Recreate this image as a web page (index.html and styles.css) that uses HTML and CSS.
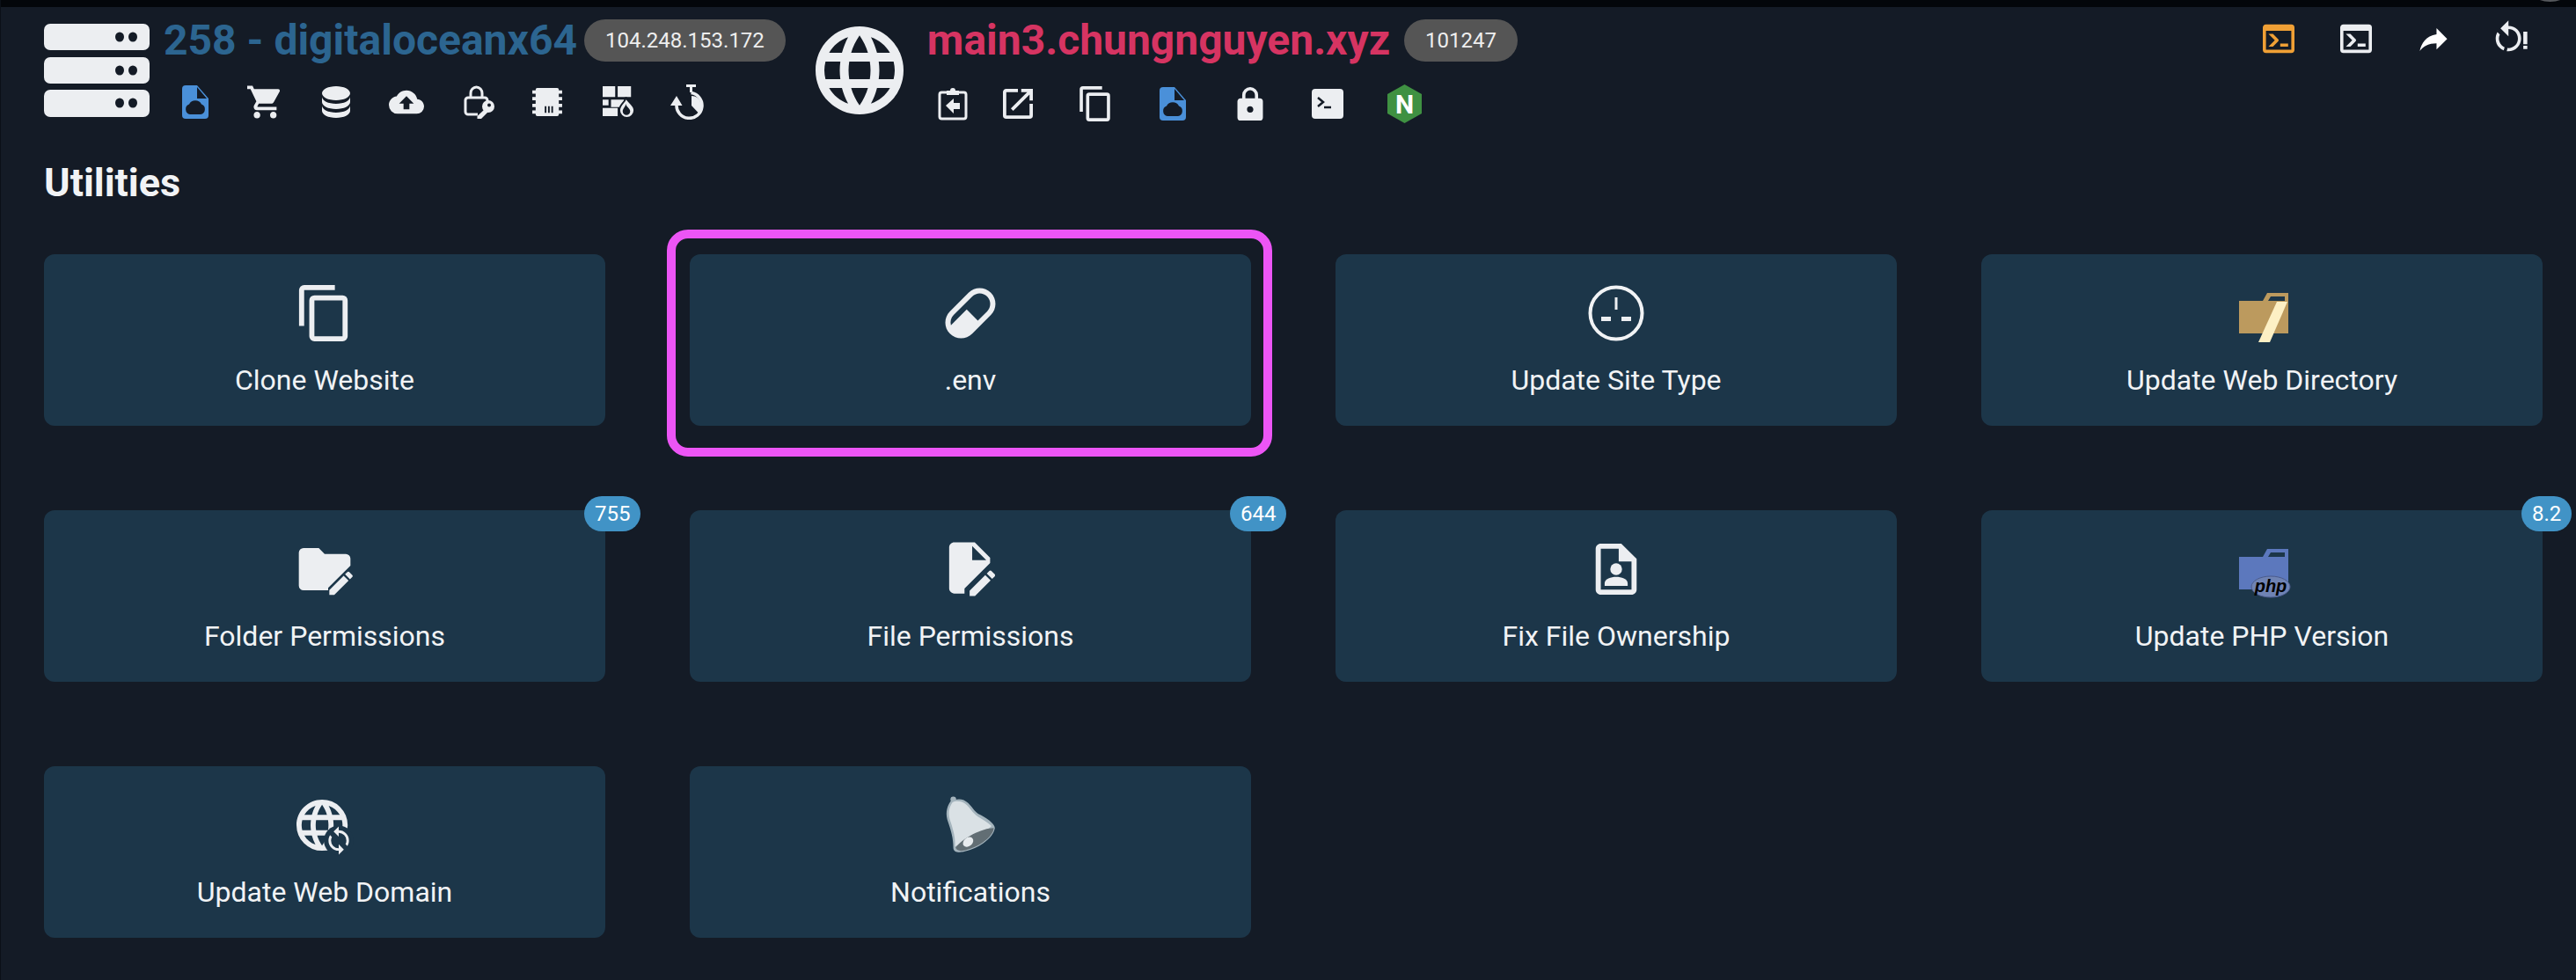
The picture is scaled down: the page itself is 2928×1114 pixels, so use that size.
FILE: index.html
```html
<!DOCTYPE html>
<html lang="en">
<head>
<meta charset="utf-8">
<title>Utilities</title>
<link rel="stylesheet" href="styles.css">
</head>
<body>
<div class="topbar"><span class="topbar-spot"></span></div>
<header class="header">
  <svg class="server-icon" viewBox="0 0 120 106">
    <rect class="ic" x="0" y="0" width="120" height="30" rx="7"/>
    <rect class="ic" x="0" y="38" width="120" height="30" rx="7"/>
    <rect class="ic" x="0" y="75" width="120" height="31" rx="7"/>
    <g class="bgfill">
      <ellipse cx="86" cy="15" rx="5" ry="5.500"/><ellipse cx="101" cy="15" rx="5" ry="5.500"/>
      <ellipse cx="86" cy="53" rx="5" ry="5.500"/><ellipse cx="101" cy="53" rx="5" ry="5.500"/>
      <ellipse cx="86" cy="90" rx="5" ry="5.500"/><ellipse cx="101" cy="90" rx="5" ry="5.500"/>
    </g>
  </svg>
  <div class="host-col">
    <div class="title-row">
      <h1 class="title title-server">258 - digitaloceanx64</h1>
      <span class="pill">104.248.153.172</span>
    </div>
    <div class="tools tools-server">
      <svg class="t-file" viewBox="0 0 30 38"><path class="blue" d="M4 0H17L30 15V34A4 4 0 0 1 26 38H4A4 4 0 0 1 0 34V4A4 4 0 0 1 4 0Z"/><path class="bgfill" d="M17 2V15H28Z M9 33A6 6 0 0 1 8 21.500A8 8 0 0 1 22 21.500A6 6 0 0 1 21 33Z"/></svg>
      <svg class="t-cart" viewBox="1 2 20.500 20"><path class="ic" d="M17,18C15.890,18 15,18.890 15,20A2,2 0 0,0 17,22A2,2 0 0,0 19,20C19,18.890 18.100,18 17,18M1,2V4H3L6.600,11.590L5.240,14.040C5.090,14.320 5,14.650 5,15A2,2 0 0,0 7,17H19V15H7.420A0.250,0.250 0 0,1 7.170,14.750C7.170,14.700 7.180,14.660 7.200,14.630L8.100,13H15.550C16.300,13 16.960,12.580 17.300,11.970L20.880,5.500C20.950,5.340 21,5.170 21,5A1,1 0 0,0 20,4H5.210L4.270,2M7,18C5.890,18 5,18.890 5,20A2,2 0 0,0 7,22A2,2 0 0,0 9,20C9,18.890 8.100,18 7,18Z"/></svg>
      <svg class="t-db" viewBox="4 3 16 18"><path class="ic" d="M12,3C7.580,3 4,4.790 4,7C4,9.210 7.580,11 12,11C16.420,11 20,9.210 20,7C20,4.790 16.420,3 12,3M4,9V12C4,14.210 7.580,16 12,16C16.420,16 20,14.210 20,12V9C20,11.210 16.420,13 12,13C7.580,13 4,11.210 4,9M4,14V17C4,19.210 7.580,21 12,21C16.420,21 20,19.210 20,17V14C20,16.210 16.420,18 12,18C7.580,18 4,16.210 4,14Z"/></svg>
      <svg class="t-cloud" viewBox="0 4 24 16"><path class="ic" d="M14,13V17H10V13H7L12,8L17,13M19.350,10.030C18.670,6.590 15.640,4 12,4C9.110,4 6.600,5.640 5.350,8.030C2.340,8.360 0,10.900 0,14A6,6 0 0,0 6,20H19A5,5 0 0,0 24,15C24,12.360 21.950,10.220 19.350,10.030Z"/></svg>
      <svg class="t-lockkey" viewBox="0 0 36 38"><path class="line" d="M8 14V9A6.500 7 0 0 1 21 9V14M16 33H5A3 3 0 0 1 2 30V17A3 3 0 0 1 5 14H24A3 3 0 0 1 27 17V18"/><circle class="ic" cx="28" cy="24" r="7"/><path class="ic" d="M24 27L27.500 30.500L20 38L15.500 38L15.500 35Z"/><circle class="bgfill" cx="29" cy="22.500" r="2"/></svg>
      <svg class="t-chip" viewBox="0 0 36 34"><rect class="ic" x="4" y="0" width="28" height="34" rx="2"/><path class="ic" d="M0 3H36V7H0ZM0 11H36V15H0ZM0 19H36V23H0ZM0 27H36V31H0Z"/><path class="bgfill" d="M15 22H17V30H15ZM19 22H21V30H19ZM23 22H25V30H23Z"/></svg>
      <svg class="t-wall" viewBox="0 0 39 38"><path class="ic" d="M0 0H15V13H0ZM18 0H34V13H18ZM0 16H7V23H0ZM10 16H26L22 25H10ZM0 26H18V36H0Z"/><path class="ic flame-edge" d="M28 13C29 19 38 21 38 29A9 9 0 0 1 20 29C20 24 23 22 26 18C27 16 28 15 28 13Z"/><path class="bgfill" d="M28 21C28 25 33 26 33 30A4.500 4.500 0 0 1 24 30C24 27 27 25 28 21Z"/></svg>
      <svg class="t-watch" viewBox="0 0 39 40"><path class="ic" d="M18 0H29V3H18ZM22 3H25V9H22Z"/><path class="arc" d="M7 23A14.500 14.500 0 1 0 23.500 9.500"/><path class="ic" d="M0 24L7 13L13.500 24Z"/><path class="ic" d="M24 13A11.500 11.500 0 0 1 32 32.500L24 24Z"/></svg>
    </div>
  </div>
  <svg class="globe-icon" viewBox="2 2 20 20"><path class="ic" d="M16.360,14C16.440,13.340 16.500,12.680 16.500,12C16.500,11.320 16.440,10.660 16.360,10H19.740C19.900,10.640 20,11.310 20,12C20,12.690 19.900,13.360 19.740,14M14.590,19.560C15.190,18.450 15.650,17.250 15.970,16H18.920C17.960,17.650 16.430,18.930 14.590,19.560M14.340,14H9.660C9.560,13.340 9.500,12.680 9.500,12C9.500,11.320 9.560,10.650 9.660,10H14.340C14.430,10.650 14.500,11.320 14.500,12C14.500,12.680 14.430,13.340 14.340,14M12,19.960C11.170,18.760 10.500,17.430 10.090,16H13.910C13.500,17.430 12.830,18.760 12,19.960M8,8H5.080C6.030,6.340 7.570,5.060 9.400,4.440C8.800,5.550 8.350,6.750 8,8M5.080,16H8C8.350,17.250 8.800,18.450 9.400,19.560C7.570,18.930 6.030,17.650 5.080,16M4.260,14C4.100,13.360 4,12.690 4,12C4,11.310 4.100,10.640 4.260,10H7.640C7.560,10.660 7.500,11.320 7.500,12C7.500,12.680 7.560,13.340 7.640,14M12,4.030C12.830,5.230 13.500,6.570 13.910,8H10.090C10.500,6.570 11.170,5.230 12,4.030M18.920,8H15.970C15.650,6.750 15.190,5.550 14.590,4.440C16.430,5.070 17.960,6.340 18.920,8M12,2C6.470,2 2,6.500 2,12A10,10 0 0,0 12,22A10,10 0 0,0 22,12A10,10 0 0,0 12,2Z"/></svg>
  <div class="host-col">
    <div class="title-row">
      <h1 class="title title-site">main3.chungnguyen.xyz</h1>
      <span class="pill pill-site">101247</span>
    </div>
    <div class="tools tools-site">
      <svg class="t-clip" viewBox="0 0 34 38"><path class="line" d="M10 6H4.500A2.500 2.500 0 0 0 2 8.500V33.500A2.500 2.500 0 0 0 4.500 36H29.500A2.500 2.500 0 0 0 32 33.500V8.500A2.500 2.500 0 0 0 29.500 6H24"/><path class="ic" d="M10 9V4H14A3 3 0 0 1 20 4H24V9Z"/><path class="ic" d="M9 21L18 13V18H25V25H18V30Z"/></svg>
      <svg class="t-open" viewBox="3 3 18 18"><path class="ic" d="M14,3V5H17.590L7.760,14.830L9.170,16.240L19,6.410V10H21V3M19,19H5V5H12V3H5C3.890,3 3,3.900 3,5V19A2,2 0 0,0 5,21H19A2,2 0 0,0 21,19V12H19V19Z"/></svg>
      <svg class="t-copy" viewBox="2 1 19 22"><path class="ic" d="M19,21H8V7H19M19,5H8A2,2 0 0,0 6,7V21A2,2 0 0,0 8,23H19A2,2 0 0,0 21,21V7A2,2 0 0,0 19,5M16,1H4A2,2 0 0,0 2,3V17H4V3H16V1Z"/></svg>
      <svg class="t-file" viewBox="0 0 30 38"><path class="blue" d="M4 0H17L30 15V34A4 4 0 0 1 26 38H4A4 4 0 0 1 0 34V4A4 4 0 0 1 4 0Z"/><path class="bgfill" d="M17 2V15H28Z M9 33A6 6 0 0 1 8 21.500A8 8 0 0 1 22 21.500A6 6 0 0 1 21 33Z"/></svg>
      <svg class="t-lock" viewBox="4 1 16 21"><path class="ic" d="M12,17A2,2 0 0,0 14,15C14,13.890 13.100,13 12,13A2,2 0 0,0 10,15A2,2 0 0,0 12,17M18,8A2,2 0 0,1 20,10V20A2,2 0 0,1 18,22H6A2,2 0 0,1 4,20V10C4,8.890 4.900,8 6,8H7V6A5,5 0 0,1 12,1A5,5 0 0,1 17,6V8H18M12,3A3,3 0 0,0 9,6V8H15V6A3,3 0 0,0 12,3Z"/></svg>
      <svg class="t-term" viewBox="0 0 36 34"><rect class="ic" width="36" height="34" rx="4"/><path class="bgline" d="M7 10L13 15L7 20M14 21H22"/></svg>
      <svg class="t-nginx" viewBox="0 0 39 44"><path class="green" d="M19.500 0L39 11V33L19.500 44L0 33V11Z"/><text class="nginx-n" x="19.500" y="33">N</text></svg>
    </div>
  </div>
  <div class="actions">
    <svg class="a-console" viewBox="2 3 20 18"><path class="orange" d="M20,19V7H4V19H20M20,3A2,2 0 0,1 22,5V19A2,2 0 0,1 20,21H4A2,2 0 0,1 2,19V5C2,3.890 2.900,3 4,3H20M13,17V15H18V17H13M9.580,13L5.570,9H8.400L11.700,12.300C12.090,12.690 12.090,13.330 11.700,13.720L8.420,17H5.590L9.580,13Z"/></svg>
    <svg class="a-console" viewBox="2 3 20 18"><path class="ic" d="M20,19V7H4V19H20M20,3A2,2 0 0,1 22,5V19A2,2 0 0,1 20,21H4A2,2 0 0,1 2,19V5C2,3.890 2.900,3 4,3H20M13,17V15H18V17H13M9.580,13L5.570,9H8.400L11.700,12.300C12.090,12.690 12.090,13.330 11.700,13.720L8.420,17H5.590L9.580,13Z"/></svg>
    <svg class="a-share" viewBox="3 4 18 15"><path class="white" d="M21,11L14,4V8C7,9 4,14 3,19C5.500,15.500 9,13.900 14,13.900V18L21,11Z"/></svg>
    <svg class="a-restart" viewBox="3.600 0.600 20.400 19.600"><path class="ic" d="M12 4C14.100 4 16.100 4.800 17.600 6.300C20.700 9.400 20.700 14.500 17.600 17.600C15.800 19.500 13.300 20.200 10.900 19.900L11.400 17.900C13.100 18.100 14.900 17.500 16.200 16.200C18.500 13.900 18.500 10.100 16.200 7.700C15.100 6.600 13.500 6 12 6V10.600L7 5.600L12 .6V4M6.300 17.600C3.700 15 3.300 11 5.100 7.900L6.600 9.400C5.500 11.600 5.900 14.400 7.800 16.200C8.300 16.700 8.900 17.100 9.600 17.400L9 19.400C8 19 7.100 18.400 6.300 17.600Z"/><path class="ic" d="M21.300 7.700H23.800V15.500H21.300ZM21.300 16.500H23.800V18.500H21.300Z"/></svg>
  </div>
</header>
<main class="content">
  <h2 class="heading">Utilities</h2>
  <div class="grid">
    <a class="card">
      <svg class="card-icon" viewBox="1 1 22 22"><path class="ic" d="M19,21H8V7H19M19,5H8A2,2 0 0,0 6,7V21A2,2 0 0,0 8,23H19A2,2 0 0,0 21,21V7A2,2 0 0,0 19,5M16,1H4A2,2 0 0,0 2,3V17H4V3H16V1Z"/></svg>
      <span class="label">Clone Website</span>
    </a>
    <a class="card card-highlight">
      <svg class="card-icon" viewBox="1.300 1.300 21.400 21.400"><path class="ic" d="M4.220,11.290L11.290,4.220C13.640,1.880 17.430,1.880 19.780,4.220C22.120,6.560 22.120,10.360 19.780,12.710L12.710,19.780C10.360,22.120 6.560,22.120 4.220,19.780C1.880,17.430 1.880,13.640 4.220,11.290M5.640,12.710C4.590,13.750 4.240,15.240 4.600,16.570L10.590,10.590L14.830,14.830L18.360,11.290C19.930,9.730 19.930,7.200 18.360,5.640C16.800,4.070 14.270,4.070 12.710,5.640L5.640,12.710Z"/></svg>
      <span class="label">.env</span>
    </a>
    <a class="card">
      <svg class="card-icon" viewBox="0 0 64 64"><circle class="ring" cx="32" cy="32" r="29.500"/><path class="ic" d="M30.500 14H33.500V28H30.500ZM15 36H26V41H15ZM38 36H49V41H38Z"/></svg>
      <span class="label">Update Site Type</span>
    </a>
    <a class="card">
      <svg class="card-icon" viewBox="0 0 64 64"><path class="gold" d="M6 18H33L38 9H62V55H6ZM42 13L39 18H58V13Z" fill-rule="evenodd"/><path class="cream" d="M49 19H61L41 65H28Z"/></svg>
      <span class="label">Update Web Directory</span>
    </a>
    <a class="card">
      <span class="badge">755</span>
      <svg class="card-icon" viewBox="0 0 24 24"><path class="ic" d="M3 3H9.500L12 5.500H21A2 2 0 0 1 23 7.500V10.500L13.500 20V21H3A2 2 0 0 1 1 19V5A2 2 0 0 1 3 3Z"/><path class="ic" transform="translate(2 0)" d="M20.100 13C20 13 19.800 13.100 19.700 13.200L18.700 14.200L20.800 16.300L21.800 15.300C22 15.100 22 14.700 21.800 14.500L20.500 13.200C20.400 13.100 20.300 13 20.100 13M18.100 14.800L12 20.900V23H14.100L20.200 16.900L18.100 14.800Z"/></svg>
      <span class="label">Folder Permissions</span>
    </a>
    <a class="card">
      <span class="badge">644</span>
      <svg class="card-icon" viewBox="1.300 1.500 22 22"><path class="ic" d="M6 2C4.900 2 4 2.900 4 4V20C4 21.100 4.900 22 6 22H10V20.100L20 10.100V8L14 2H6M13 3.500L18.500 9H13V3.500M20.100 13C20 13 19.800 13.100 19.700 13.200L18.700 14.200L20.800 16.300L21.800 15.300C22 15.100 22 14.700 21.800 14.500L20.500 13.200C20.400 13.100 20.300 13 20.100 13M18.100 14.800L12 20.900V23H14.100L20.200 16.900L18.100 14.800Z"/></svg>
      <span class="label">File Permissions</span>
    </a>
    <a class="card">
      <svg class="card-icon" viewBox="1 1 22 22"><path class="ic" d="M14 2H6C4.900 2 4 2.900 4 4V20C4 21.100 4.900 22 6 22H18C19.100 22 20 21.100 20 20V8L14 2M18 20H6V4H13V9H18V20Z"/><circle class="ic" cx="12" cy="12" r="2.300"/><path class="ic" d="M7.500 18.500V17.500C7.500 15.800 10 15 12 15C14 15 16.500 15.800 16.500 17.500V18.500Z"/></svg>
      <span class="label">Fix File Ownership</span>
    </a>
    <a class="card">
      <span class="badge">8.2</span>
      <svg class="card-icon" viewBox="0 0 64 64"><path class="php-blue" d="M6 18H33L38 9H62V55H6ZM42 13L39 18H58V13Z" fill-rule="evenodd"/><ellipse class="php-oval" cx="42" cy="52" rx="22" ry="12"/><text class="php-text" x="42" y="58">php</text></svg>
      <span class="label">Update PHP Version</span>
    </a>
    <a class="card">
      <svg class="card-icon" viewBox="2 1 22 22"><path class="ic" d="M16.360,14C16.440,13.340 16.500,12.680 16.500,12C16.500,11.320 16.440,10.660 16.360,10H19.740C19.900,10.640 20,11.310 20,12C20,12.690 19.900,13.360 19.740,14M14.590,19.560C15.190,18.450 15.650,17.250 15.970,16H18.920C17.960,17.650 16.430,18.930 14.590,19.560M14.340,14H9.660C9.560,13.340 9.500,12.680 9.500,12C9.500,11.320 9.560,10.650 9.660,10H14.340C14.430,10.650 14.500,11.320 14.500,12C14.500,12.680 14.430,13.340 14.340,14M12,19.960C11.170,18.760 10.500,17.430 10.090,16H13.910C13.500,17.430 12.830,18.760 12,19.960M8,8H5.080C6.030,6.340 7.570,5.060 9.400,4.440C8.800,5.550 8.350,6.750 8,8M5.080,16H8C8.350,17.250 8.800,18.450 9.400,19.560C7.570,18.930 6.030,17.650 5.080,16M4.260,14C4.100,13.360 4,12.690 4,12C4,11.310 4.100,10.640 4.260,10H7.640C7.560,10.660 7.500,11.320 7.500,12C7.500,12.680 7.560,13.340 7.640,14M12,4.030C12.830,5.230 13.500,6.570 13.910,8H10.090C10.500,6.570 11.170,5.230 12,4.030M18.920,8H15.970C15.650,6.750 15.190,5.550 14.590,4.440C16.430,5.070 17.960,6.340 18.920,8M12,2C6.470,2 2,6.500 2,12A10,10 0 0,0 12,22A10,10 0 0,0 22,12A10,10 0 0,0 12,2Z"/><circle class="cardfill" cx="18.500" cy="18" r="5.800"/><path class="ic" transform="translate(12.500 12) scale(.5)" d="M12,18A6,6 0 0,1 6,12C6,11 6.250,10.030 6.700,9.200L5.240,7.740C4.460,8.970 4,10.430 4,12A8,8 0 0,0 12,20V23L16,19L12,15M12,4V1L8,5L12,9V6A6,6 0 0,1 18,12C18,13 17.750,13.970 17.300,14.800L18.760,16.260C19.540,15.030 20,13.570 20,12A8,8 0 0,0 12,4Z"/></svg>
      <span class="label">Update Web Domain</span>
    </a>
    <a class="card">
      <svg class="card-icon card-icon-bell" viewBox="100 40 176 210">
        <circle class="bell-edge" cx="128" cy="55" r="10"/>
        <path class="bell-edge" d="M118 62C103 85 100 108 110 135C120 165 128 190 128 225C130 242 150 244 180 234C222 222 268 190 274 155C272 138 245 120 215 105C197 92 190 70 165 57C150 52 133 54 118 62Z"/>
        <path class="bell-body" d="M124 66C110 88 110 108 118 132C128 162 136 190 134 220C170 205 235 175 262 148C250 135 228 124 208 110C190 96 184 76 160 64C148 60 134 60 124 66Z"/>
        <path class="bell-mouth" d="M136 224C160 190 230 155 270 155C268 185 222 218 180 230C158 237 142 238 136 224Z"/>
        <ellipse class="bell-clapper" cx="180" cy="204" rx="20" ry="15" transform="rotate(-40 180 204)"/>
      </svg>
      <span class="label">Notifications</span>
    </a>
  </div>
</main>
</body>
</html>
```
FILE: styles.css
```css
* { box-sizing: border-box; }
html, body { margin: 0; padding: 0; }
body {
  width: 2928px;
  height: 1114px;
  overflow: hidden;
  background: #141b26;
  border-left: 1px solid #0b1017;
  font-family: Roboto, "Liberation Sans", sans-serif;
  color: #f1f3f5;
}
.topbar { position: relative; height: 8px; margin-left: -1px; background: #03060a; overflow: hidden; }
.topbar-spot { position: absolute; left: 2880px; top: -16px; width: 37px; height: 18px; border-radius: 50%; background: #55585c; }

.header { display: flex; align-items: flex-start; height: 127px; padding: 14px 55px 0 49px; }
.server-icon { width: 120px; height: 106px; margin-top: 5px; margin-right: 16px; flex: none; }
.globe-icon { width: 100px; height: 100px; margin-top: 8px; margin-left: 34px; margin-right: 27px; flex: none; }
.host-col { display: flex; flex-direction: column; flex: none; }
.title-row { display: flex; align-items: center; height: 48px; }
.title { margin: 0; font-size: 48px; line-height: 48px; font-weight: 700; white-space: nowrap; }
.title-server { color: #2c6590; }
.title-site { color: #d63462; }
.pill { display: flex; align-items: center; height: 48px; padding: 0 24px; margin-left: 8px; border-radius: 24px; background: #555555; color: #eeeeee; font-size: 24px; }
.pill-site { margin-left: 16px; }

.tools { display: grid; justify-items: start; align-items: center; margin-top: 26px; height: 38px; }
.tools-server { grid-template-columns: 74px 85px 76px 85px 77px 80px 78px 40px; margin-left: 21px; }
.tools-site { grid-template-columns: 74px 87px 91px 88px 85px 86px 40px; margin-left: 12px; }
.t-file { width: 30px; height: 38px; }
.t-cart { width: 38px; height: 38px; }
.t-db { width: 32px; height: 36px; }
.t-cloud { width: 40px; height: 30px; }
.t-lockkey { width: 36px; height: 38px; }
.t-chip { width: 36px; height: 32px; }
.t-wall { width: 39px; height: 36px; }
.t-watch { width: 39px; height: 40px; }
.t-clip { width: 34px; height: 38px; }
.t-open { width: 34px; height: 34px; }
.t-copy { width: 35px; height: 40px; }
.t-lock { width: 30px; height: 38px; }
.t-term { width: 36px; height: 34px; }
.t-nginx { width: 39px; height: 44px; }

.actions { display: grid; grid-template-columns: 88px 90px 86px 37px; align-items: start; margin-left: auto; margin-top: 1px; }
.a-console { width: 36px; height: 34px; margin-top: 4px; }
.a-share { width: 32px; height: 26px; margin-top: 9px; }
.a-restart { width: 37px; height: 36px; }

.ic { fill: #eceef1; }
.flame-edge { stroke: #141b26; stroke-width: 2; }
.arc { fill: none; stroke: #eceef1; stroke-width: 3.500; }
.white { fill: #ffffff; }
.blue { fill: #4a90d9; }
.orange { fill: #f0a035; }
.green { fill: #3f9142; }
.bgfill { fill: #141b26; }
.cardfill { fill: #1c3649; }
.line { fill: none; stroke: #eceef1; stroke-width: 3; }
.bgline { fill: none; stroke: #141b26; stroke-width: 2.500; }
.ring { fill: none; stroke: #f1f3f5; stroke-width: 4; }
.gold { fill: #bc9a5e; }
.cream { fill: #fdf0c4; }
.php-blue { fill: #5c78bd; }
.php-oval { fill: #6f83b4; stroke: #4b5b8c; stroke-width: 1; }
.php-text { fill: #000000; font-family: "Liberation Sans", sans-serif; font-size: 20px; font-style: italic; font-weight: 700; text-anchor: middle; }
.nginx-n { fill: #ffffff; font-family: Roboto, sans-serif; font-size: 30px; font-weight: 700; text-anchor: middle; }
.bell-edge { fill: #a4b4bd; }
.bell-body { fill: #dae1e5; }
.bell-mouth { fill: #626e74; }
.bell-clapper { fill: #e8ecef; }

.content { padding-left: 49px; }
.heading { margin: 49px 0 0; font-size: 45px; line-height: 48px; font-weight: 700; color: #f1f3f5; }
.grid { display: grid; grid-template-columns: repeat(4, 638px); grid-auto-rows: 195px; column-gap: 96px; row-gap: 96px; margin-top: 57px; }
.card { position: relative; display: flex; flex-direction: column; align-items: center; padding-top: 35px; border-radius: 12px; background: #1c3649; }
.card-icon { width: 64px; height: 64px; flex: none; margin-bottom: 20px; overflow: visible; }
.card-icon-bell { width: 60px; height: 68px; margin-top: -2px; margin-bottom: 18px; }
.label { font-size: 32px; line-height: 48px; color: #f1f3f5; white-space: nowrap; }
.badge { position: absolute; left: calc(100% - 24px); top: -16px; height: 40px; padding: 0 12px; border-radius: 20px; background: #4193c6; color: #ffffff; font-size: 24px; line-height: 40px; }
.card-highlight::after { content: ""; position: absolute; top: -28px; right: -24px; bottom: -35px; left: -26px; border: 10px solid #ec55f5; border-radius: 24px; pointer-events: none; }
```
